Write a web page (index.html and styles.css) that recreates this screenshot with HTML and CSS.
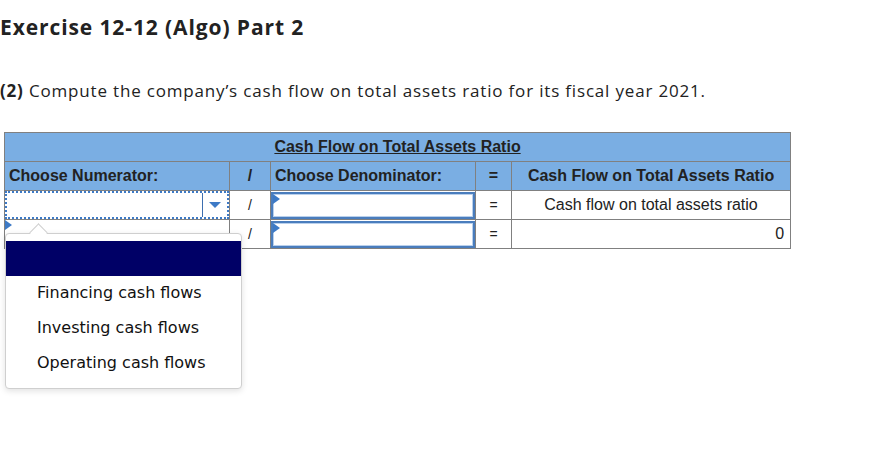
FILE: index.html
```html
<!DOCTYPE html>
<html>
<head>
<meta charset="utf-8">
<link rel="stylesheet" href="styles.css">
</head>
<body>
<h1 class="title">Exercise 12-12 (Algo) Part 2</h1>
<p class="question"><b>(2)</b> Compute the company’s cash flow on total assets ratio for its fiscal year 2021.</p>
<div class="wrap">
<table class="grid">
  <colgroup>
    <col class="c1"><col class="c2"><col class="c3"><col class="c4"><col class="c5">
  </colgroup>
  <tr class="hrow">
    <th colspan="5" class="caption"><u>Cash Flow on Total Assets Ratio</u></th>
  </tr>
  <tr class="hrow">
    <th class="left">Choose Numerator:</th>
    <th>/</th>
    <th class="left">Choose Denominator:</th>
    <th>=</th>
    <th>Cash Flow on Total Assets Ratio</th>
  </tr>
  <tr class="brow">
    <td class="sel-cell"><div class="select"><span class="sel-btn"><span class="arrow"></span></span></div></td>
    <td class="op">/</td>
    <td class="in-cell"><div class="input"><span class="flag"></span></div></td>
    <td class="op">=</td>
    <td class="center">Cash flow on total assets ratio</td>
  </tr>
  <tr class="brow">
    <td class="sel-cell2"><span class="flag"></span></td>
    <td class="op">/</td>
    <td class="in-cell"><div class="input"><span class="flag"></span></div></td>
    <td class="op">=</td>
    <td class="right">0</td>
  </tr>
</table>
<div class="popup">
  <span class="caret"></span>
  <div class="hl"></div>
  <ul class="opts">
    <li>Financing cash flows</li>
    <li>Investing cash flows</li>
    <li>Operating cash flows</li>
  </ul>
</div>
</div>
</body>
</html>
```

FILE: styles.css
```css
html, body { margin: 0; padding: 0; background: #fff; }
body { font-family: "Open Sans", "Liberation Sans", sans-serif; color: #222; min-height: 468px; }

.title {
  margin: 0;
  padding: 13px 0 0 0;
  font-size: 21px;
  font-weight: 700;
  line-height: 28px;
  color: #222;
  letter-spacing: 0.9px;
}
.question {
  margin: 0;
  padding-top: 38px;
  font-size: 17px;
  line-height: 24px;
  color: #222;
  letter-spacing: 0.82px;
}
.question b { font-weight: 700; }

.wrap { position: relative; margin-top: 29px; padding-left: 4px; height: 270px; }

.grid {
  border-collapse: collapse;
  table-layout: fixed;
  width: 786px;
  font-family: "Liberation Sans", Arial, sans-serif;
  font-size: 16px;
  border: 1px solid #808080;
}
.c1 { width: 225px; } .c2 { width: 41px; } .c3 { width: 205px; } .c4 { width: 36px; } .c5 { width: 279px; }

.grid th, .grid td { border: 1px solid #808080; padding: 0; }
.hrow th {
  background: #7aaee3;
  height: 28px;
  font-weight: 700;
  color: #222;
  text-align: center;
}
.hrow th.left { text-align: left; padding-left: 4px; }
.brow td { height: 28px; background: #fff; color: #222; }
.center { text-align: center; }
.right { text-align: right; padding-right: 6px !important; }
.op { text-align: center; color: #555; font-size: 14px; }

.sel-cell { padding: 0 !important; }
.select {
  height: 24px;
  border: 2px dotted #3d7ac6;
  display: flex;
  justify-content: flex-end;
}
.sel-btn {
  width: 24px;
  border-left: 1px solid #3d6fb0;
  display: flex;
  align-items: center;
  justify-content: center;
}
.arrow {
  width: 0; height: 0;
  border-left: 6px solid transparent;
  border-right: 6px solid transparent;
  border-top: 6px solid #3d7ac6;
}

.sel-cell2 { position: relative; vertical-align: top; }
.flag {
  position: absolute;
  left: 0; top: 0;
  width: 0; height: 0;
  border-top: 5px solid transparent;
  border-bottom: 5px solid transparent;
  border-left: 7px solid #3d7ac6;
}

.in-cell { padding: 0 !important; }
.input {
  position: relative;
  height: 23px;
  border: 2px solid #4a7dbd;
  box-shadow: inset 0 0 0 1px #b9d0ec;
  background: #fff;
}

.popup {
  position: absolute;
  left: 5px;
  top: 101px;
  width: 235px;
  height: 154px;
  background: #fff;
  border: 1px solid #cfcfcf;
  border-radius: 4px;
  box-shadow: 0 2px 6px rgba(0,0,0,0.12);
  z-index: 5;
}
.caret {
  position: absolute;
  left: 26px;
  top: -8px;
  width: 12px; height: 12px;
  background: #fff;
  border-left: 1px solid #cfcfcf;
  border-top: 1px solid #cfcfcf;
  transform: rotate(45deg);
}
.hl { margin-top: 7px; height: 35px; background: #000066; position: relative; }
.opts {
  list-style: none;
  margin: 0;
  padding: 5px 0 0 31px;
  font-family: "DejaVu Sans", Verdana, sans-serif;
  font-size: 16px;
  color: #111;
}
.opts li { height: 35px; line-height: 24px; }
```
